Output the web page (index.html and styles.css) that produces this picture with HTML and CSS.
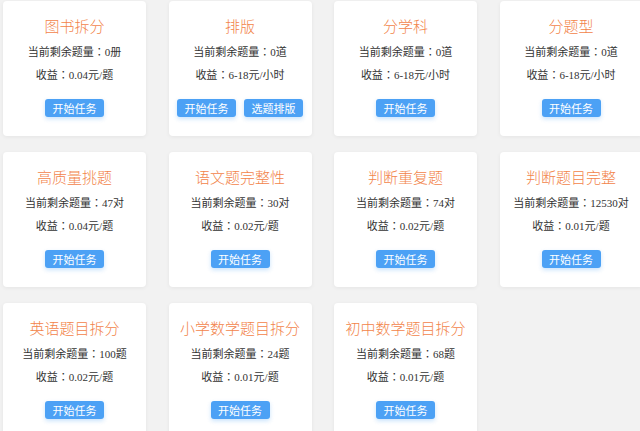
FILE: index.html
```html
<!DOCTYPE html>
<html lang="zh-CN">
<head>
<meta charset="utf-8">
<title>任务列表</title>
<link rel="stylesheet" href="styles.css">
</head>
<body>
<div class="grid">
  <div class="card">
    <div class="title">图书拆分</div>
    <div class="line">当前剩余题量<span class="colon" lang="zh-TW">：</span>0册</div>
    <div class="line">收益<span class="colon" lang="zh-TW">：</span>0.04元/题</div>
    <div class="actions"><span class="btn">开始任务</span></div>
  </div>
  <div class="card">
    <div class="title">排版</div>
    <div class="line">当前剩余题量<span class="colon" lang="zh-TW">：</span>0道</div>
    <div class="line">收益<span class="colon" lang="zh-TW">：</span>6-18元/小时</div>
    <div class="actions"><span class="btn">开始任务</span><span class="btn">选题排版</span></div>
  </div>
  <div class="card">
    <div class="title">分学科</div>
    <div class="line">当前剩余题量<span class="colon" lang="zh-TW">：</span>0道</div>
    <div class="line">收益<span class="colon" lang="zh-TW">：</span>6-18元/小时</div>
    <div class="actions"><span class="btn">开始任务</span></div>
  </div>
  <div class="card">
    <div class="title">分题型</div>
    <div class="line">当前剩余题量<span class="colon" lang="zh-TW">：</span>0道</div>
    <div class="line">收益<span class="colon" lang="zh-TW">：</span>6-18元/小时</div>
    <div class="actions"><span class="btn">开始任务</span></div>
  </div>
  <div class="card">
    <div class="title">高质量挑题</div>
    <div class="line">当前剩余题量<span class="colon" lang="zh-TW">：</span>47对</div>
    <div class="line">收益<span class="colon" lang="zh-TW">：</span>0.04元/题</div>
    <div class="actions"><span class="btn">开始任务</span></div>
  </div>
  <div class="card">
    <div class="title">语文题完整性</div>
    <div class="line">当前剩余题量<span class="colon" lang="zh-TW">：</span>30对</div>
    <div class="line">收益<span class="colon" lang="zh-TW">：</span>0.02元/题</div>
    <div class="actions"><span class="btn">开始任务</span></div>
  </div>
  <div class="card">
    <div class="title">判断重复题</div>
    <div class="line">当前剩余题量<span class="colon" lang="zh-TW">：</span>74对</div>
    <div class="line">收益<span class="colon" lang="zh-TW">：</span>0.02元/题</div>
    <div class="actions"><span class="btn">开始任务</span></div>
  </div>
  <div class="card">
    <div class="title">判断题目完整</div>
    <div class="line">当前剩余题量<span class="colon" lang="zh-TW">：</span>12530对</div>
    <div class="line">收益<span class="colon" lang="zh-TW">：</span>0.01元/题</div>
    <div class="actions"><span class="btn">开始任务</span></div>
  </div>
  <div class="card">
    <div class="title">英语题目拆分</div>
    <div class="line">当前剩余题量<span class="colon" lang="zh-TW">：</span>100题</div>
    <div class="line">收益<span class="colon" lang="zh-TW">：</span>0.02元/题</div>
    <div class="actions"><span class="btn">开始任务</span></div>
  </div>
  <div class="card">
    <div class="title">小学数学题目拆分</div>
    <div class="line">当前剩余题量<span class="colon" lang="zh-TW">：</span>24题</div>
    <div class="line">收益<span class="colon" lang="zh-TW">：</span>0.01元/题</div>
    <div class="actions"><span class="btn">开始任务</span></div>
  </div>
  <div class="card">
    <div class="title">初中数学题目拆分</div>
    <div class="line">当前剩余题量<span class="colon" lang="zh-TW">：</span>68题</div>
    <div class="line">收益<span class="colon" lang="zh-TW">：</span>0.01元/题</div>
    <div class="actions"><span class="btn">开始任务</span></div>
  </div>
</div>
</body>
</html>
```

FILE: styles.css
```css
html, body {
  margin: 0;
  padding: 0;
  background: #f2f2f2;
  overflow: hidden;
}
body {
  font-family: "Liberation Serif", "Noto Sans CJK SC", serif;
  color: #333;
  width: 640px;
  height: 431px;
}
.grid {
  display: grid;
  grid-template-columns: repeat(4, 143px);
  column-gap: 22.5px;
  row-gap: 16px;
  padding: 1px 0 0 3px;
}
.card {
  background: #fff;
  border-radius: 4px;
  box-shadow: 0 1px 4px rgba(0, 0, 0, 0.06);
  height: 135px;
  box-sizing: border-box;
  padding-top: 15px;
  display: flex;
  flex-direction: column;
  align-items: center;
}
.title {
  font-family: "Noto Sans CJK SC", sans-serif;
  font-size: 15px;
  font-weight: 300;
  line-height: 20px;
  color: #f2844a;
  margin-bottom: 4px;
}
.line {
  font-size: 11px;
  line-height: 22px;
  height: 22px;
  color: #333;
  margin-bottom: 1px;
}
.colon {
  font-family: "Noto Sans CJK TC", sans-serif;
}
.actions {
  display: flex;
  gap: 8px;
  margin-top: 13px;
}
.btn {
  display: block;
  width: 59px;
  height: 18px;
  line-height: 18px;
  text-align: center;
  font-family: "Noto Sans CJK SC", sans-serif;
  font-size: 11px;
  color: #fff;
  background: #4ca1f5;
  border-radius: 3px;
  box-shadow: 0 2px 4px rgba(76, 161, 245, 0.3);
}
```
